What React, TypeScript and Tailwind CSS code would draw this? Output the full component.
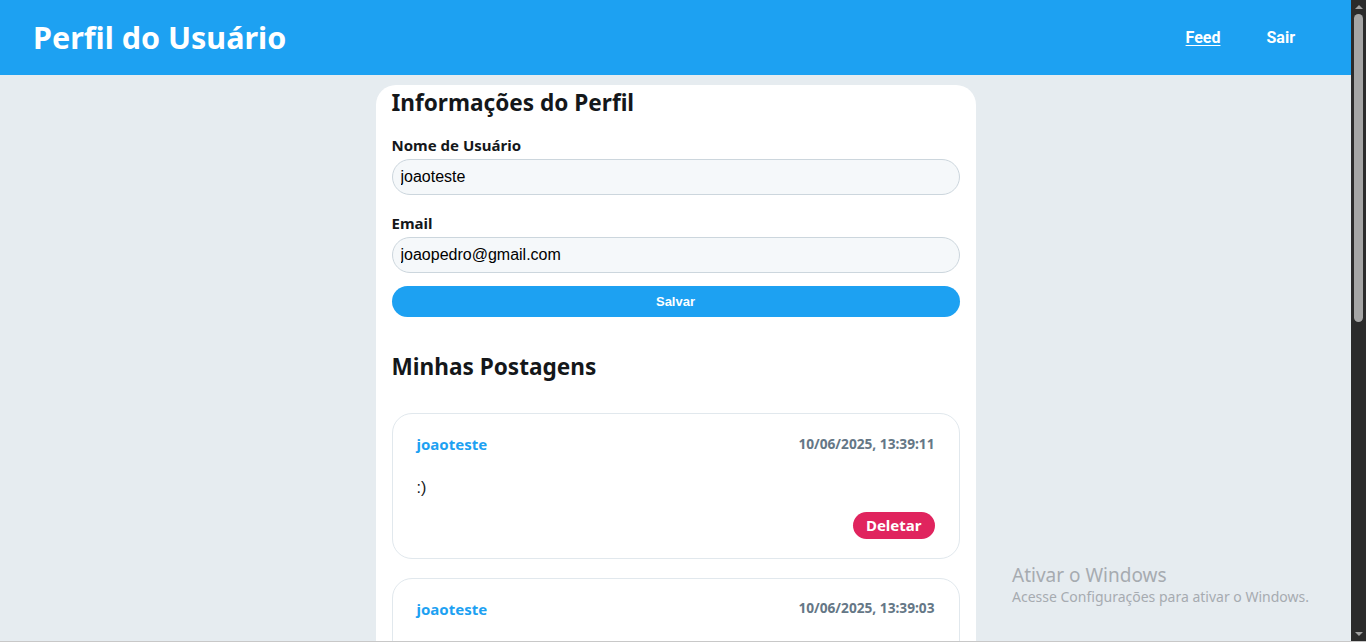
import React from 'react';

const SEGOE = "font-['Noto_Sans',sans-serif]";
const ARIAL = "font-['Liberation_Sans',Arial,sans-serif]";

type Post = { id: number; author: string; date: string; body: string };

const POSTS: Post[] = [
  { id: 1, author: 'joaoteste', date: '10/06/2025, 13:39:11', body: ':)' },
  { id: 2, author: 'joaoteste', date: '10/06/2025, 13:39:03', body: 'teste' },
];

function Header() {
  return (
    <header className="flex h-[75px] shrink-0 items-center justify-between bg-[#1da1f2] pl-[33px] pr-[56px]">
      <h1 className={`${SEGOE} text-[30.5px] font-bold leading-none text-white`}>
        Perfil do Usuário
      </h1>
      <nav className="flex items-center gap-[46px] font-['Roboto',sans-serif] text-[16px] font-bold text-white">
        <a className="underline underline-offset-2">Feed</a>
        <a>Sair</a>
      </nav>
    </header>
  );
}

function Field({ label, value, gap }: { label: string; value: string; gap: string }) {
  return (
    <div className={gap}>
      <label className={`${SEGOE} mb-[4px] block text-[15px] font-bold leading-[20px] text-[#14171a]`}>
        {label}
      </label>
      <input
        readOnly
        value={value}
        className={`${ARIAL} h-[36px] w-full rounded-full border border-[#ccd6dd] bg-[#f5f8fa] px-[8px] text-[16px] text-black outline-none`}
      />
    </div>
  );
}

function PostCard({ post }: { post: Post }) {
  return (
    <div className="mb-[19px] rounded-[20px] border border-[#e1e8ed] bg-white px-[24px] pb-[19px] pt-[19px]">
      <div className={`${SEGOE} flex items-center justify-between`}>
        <span className="text-[15px] font-bold text-[#1da1f2]">{post.author}</span>
        <span className="text-[13.7px] font-bold text-[#657786]">{post.date}</span>
      </div>
      <p className={`${ARIAL} mt-[20px] text-[16px] text-[#14171a]`}>{post.body}</p>
      <div className="mt-[12px] flex justify-end">
        <button className={`${SEGOE} h-[27px] rounded-full bg-[#e0245e] px-[13px] text-[15px] font-bold text-white`}>
          Deletar
        </button>
      </div>
    </div>
  );
}

export default function App() {
  return (
    <div className="relative flex h-[642px] w-[1366px] overflow-hidden bg-[#e6ecf0]">
      <div className="flex min-w-0 flex-1 flex-col">
        <Header />
        <main className="flex flex-1 justify-center pt-[10px]">
          <section className="w-[600px] rounded-t-[20px] bg-white px-[16px] pt-[3px]">
            <h2 className={`${SEGOE} mb-[17px] text-[22.6px] font-bold leading-[30px] text-[#14171a]`}>
              Informações do Perfil
            </h2>
            <Field label="Nome de Usuário" value="joaoteste" gap="mb-[18px]" />
            <Field label="Email" value="joaopedro@gmail.com" gap="mb-[13px]" />
            <button className={`${ARIAL} h-[31px] w-full rounded-full bg-[#1da1f2] text-[13px] font-bold text-white`}>
              Salvar
            </button>
            <h2 className={`${SEGOE} mb-[31px] mt-[35px] text-[22.6px] font-bold leading-[30px] text-[#14171a]`}>
              Minhas Postagens
            </h2>
            {POSTS.map((p) => (
              <PostCard key={p.id} post={p} />
            ))}
          </section>
        </main>
      </div>
      {/* fake classic scrollbar */}
      <div className="flex w-[15px] shrink-0 flex-col items-center bg-[#2b2b2b]">
        <div className="mt-[5px] h-0 w-0 border-x-[4px] border-b-[4px] border-x-transparent border-b-[#a0a0a0]" />
        <div className="mt-[5px] h-[308px] w-[9px] rounded-full bg-[#a5a5a5]" />
        <div className="mt-auto mb-[6px] h-0 w-0 border-x-[4px] border-t-[4px] border-x-transparent border-t-[#a0a0a0]" />
      </div>
      <div className="absolute bottom-0 left-0 h-[1px] w-full bg-[#c8c8c8]" />
      <div className={`${SEGOE} pointer-events-none absolute left-[1012px] top-[563px] text-[#a6abb0]`}>
        <div className="text-[19px] leading-[24px]">Ativar o Windows</div>
        <div className="text-[14px] leading-[20px]">Acesse Configurações para ativar o Windows.</div>
      </div>
    </div>
  );
}
